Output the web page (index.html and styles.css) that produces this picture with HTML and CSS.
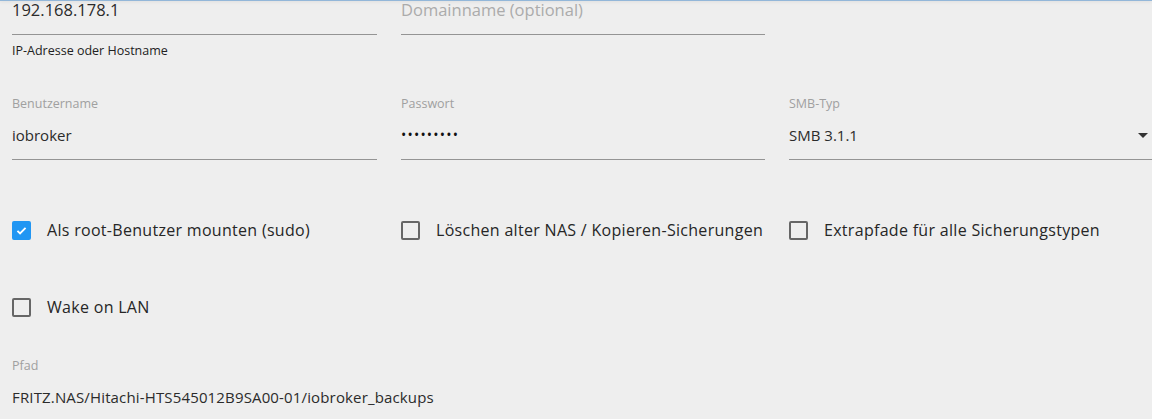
FILE: index.html
```html
<!DOCTYPE html>
<html lang="de">
<head>
    <meta charset="UTF-8">
    <meta name="viewport" content="width=device-width, initial-scale=1.0">
    <title>Backup Einstellungen</title>
    <link rel="stylesheet" href="styles.css">
</head>
<body>
    <div class="scroll-edge"></div>

    <div class="form">
        <!-- Server / Domain -->
        <div class="row row-server">
            <div class="field">
                <div class="input">192.168.178.1</div>
                <div class="helper">IP-Adresse oder Hostname</div>
            </div>
            <div class="field">
                <div class="input placeholder">Domainname (optional)</div>
            </div>
        </div>

        <!-- Login -->
        <div class="row row-login">
            <div class="field">
                <label class="label">Benutzername</label>
                <div class="input">iobroker</div>
            </div>
            <div class="field">
                <label class="label">Passwort</label>
                <div class="input password">•••••••••</div>
            </div>
            <div class="field">
                <label class="label">SMB-Typ</label>
                <div class="input select">
                    <span>SMB 3.1.1</span>
                    <span class="arrow"></span>
                </div>
            </div>
        </div>

        <!-- Options -->
        <div class="row row-checks">
            <label class="check">
                <span class="box checked">
                    <svg viewBox="0 0 24 24"><path d="M5.5 12.5l4.2 4.2 8.8-9" fill="none" stroke="#fff" stroke-width="3"/></svg>
                </span>
                <span class="check-text">Als root-Benutzer mounten (sudo)</span>
            </label>
            <label class="check">
                <span class="box"></span>
                <span class="check-text">Löschen alter NAS / Kopieren-Sicherungen</span>
            </label>
            <label class="check">
                <span class="box"></span>
                <span class="check-text">Extrapfade für alle Sicherungstypen</span>
            </label>
        </div>

        <div class="row row-checks row-wake">
            <label class="check">
                <span class="box"></span>
                <span class="check-text">Wake on LAN</span>
            </label>
        </div>

        <!-- Path -->
        <div class="field path">
            <label class="label">Pfad</label>
            <div class="input plain">FRITZ.NAS/Hitachi-HTS545012B9SA00-01/iobroker_backups</div>
        </div>
    </div>
</body>
</html>
```

FILE: styles.css
```css
/* Basic reset */
* {
    margin: 0;
    padding: 0;
    box-sizing: border-box;
}

body {
    font-family: "Open Sans", "Noto Sans", sans-serif;
    background-color: #eeeeee;
    color: #333;
    overflow: hidden;
    height: 100vh;
}

.scroll-edge {
    position: fixed;
    top: 0;
    left: 0;
    right: 0;
    height: 1px;
    background-color: #93b7d9;
    box-shadow: 0 1px 3px rgba(0, 0, 0, 0.12);
    z-index: 2;
}

.form {
    padding-left: 12px;
    margin-top: -2px;
}

.row {
    display: grid;
    grid-template-columns: 365px 364px 365px;
    column-gap: 24px;
}

.row-server .input {
    font-size: 16.5px;
    padding-bottom: 12px;
}

.row-login {
    margin-top: 37px;
}

.field {
    display: flex;
    flex-direction: column;
}

.label {
    font-size: 12.5px;
    line-height: 16px;
    color: #a0a0a0;
    margin-bottom: 11px;
}

.input {
    font-size: 15px;
    line-height: 24px;
    color: #2b2b2b;
    padding-bottom: 12px;
    border-bottom: 1px solid #949494;
}

.placeholder {
    color: #ababab;
}

.password {
    font-size: 14px;
    letter-spacing: 1.2px;
    color: #111;
}

.select {
    display: flex;
    justify-content: space-between;
    align-items: center;
    padding-right: 6px;
}

.arrow {
    width: 0;
    height: 0;
    border-left: 5px solid transparent;
    border-right: 5px solid transparent;
    border-top: 5px solid #333;
}

.helper {
    font-size: 12.5px;
    line-height: 16px;
    margin-top: 8px;
    color: #222;
}

/* checkboxes */
.row-checks {
    margin-top: 49px;
    height: 42px;
    align-items: center;
}

.row-wake {
    margin-top: 35px;
}

.check {
    display: flex;
    align-items: center;
}

.box {
    width: 19px;
    height: 19px;
    border: 2px solid #666;
    border-radius: 2px;
    flex-shrink: 0;
    display: flex;
    align-items: center;
    justify-content: center;
}

.box.checked {
    background-color: #2196f3;
    border-color: #2196f3;
}

.box svg {
    width: 17px;
    height: 17px;
}

.check-text {
    margin-left: 16px;
    font-size: 16px;
    letter-spacing: 0.3px;
    color: #262626;
}

.path {
    margin-top: 30px;
}

.path .label {
    margin-bottom: 11px;
}

.plain {
    letter-spacing: 0.15px;
    border-bottom: none;
}
```
